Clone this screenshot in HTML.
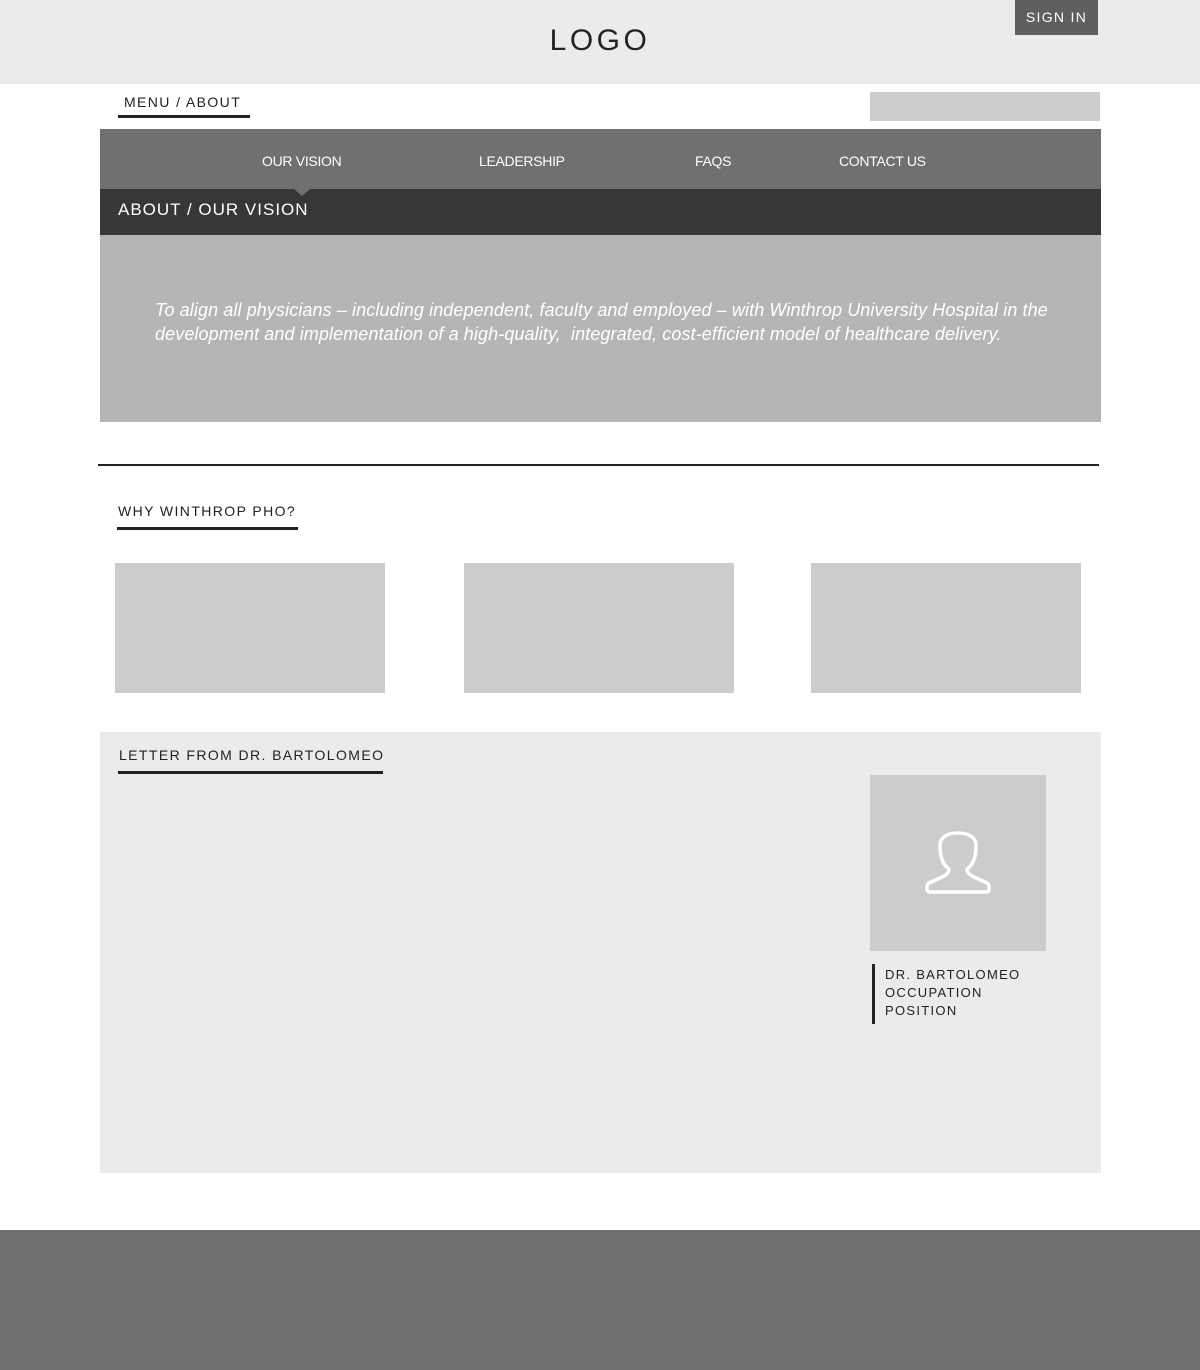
<!DOCTYPE html>
<html><head><meta charset="utf-8"><style>
*{margin:0;padding:0;box-sizing:border-box}
body{width:1200px;height:1370px;background:#fff;font-family:"Liberation Sans",sans-serif;position:relative;overflow:hidden}
.a{position:absolute}
</style></head><body>
<div class="a" style="left:0;top:0;width:1200px;height:84px;background:#ebebeb"></div>
<div class="a" style="left:0;top:24px;width:1200px;text-align:center;font-size:30px;letter-spacing:3.5px;color:#222">LOGO</div>
<div class="a" style="left:1015px;top:0;width:83px;height:35px;background:#5f5f5f;color:#fff;font-size:14px;letter-spacing:1.3px;text-align:center;line-height:34px">SIGN IN</div>
<div class="a" style="left:124px;top:94px;font-size:14px;letter-spacing:1.4px;color:#222">MENU / ABOUT</div>
<div class="a" style="left:118px;top:115px;width:132px;height:3px;background:#222"></div>
<div class="a" style="left:870px;top:92px;width:230px;height:29px;background:#cccccc"></div>
<div class="a" style="left:100px;top:129px;width:1001px;height:60px;background:#707070"></div>
<div class="a" style="left:262px;top:153px;color:#fff;font-size:14px;letter-spacing:-0.3px">OUR VISION</div>
<div class="a" style="left:479px;top:153px;color:#fff;font-size:14px;letter-spacing:-0.3px">LEADERSHIP</div>
<div class="a" style="left:695px;top:153px;color:#fff;font-size:14px;letter-spacing:-0.3px">FAQS</div>
<div class="a" style="left:839px;top:153px;color:#fff;font-size:14px;letter-spacing:-0.3px">CONTACT US</div>
<div class="a" style="left:100px;top:189px;width:1001px;height:46px;background:#373737"></div>
<div class="a" style="left:294px;top:189px;width:0;height:0;border-left:8px solid transparent;border-right:8px solid transparent;border-top:7px solid #707070"></div>
<div class="a" style="left:118px;top:200px;color:#fff;font-size:17px;letter-spacing:1px">ABOUT / OUR VISION</div>
<div class="a" style="left:100px;top:235px;width:1001px;height:187px;background:#b5b5b5"></div>
<div class="a" style="left:155px;top:298px;width:940px;color:#fff;font-size:18px;font-style:italic;line-height:24px;letter-spacing:0.1px">To align all physicians – including independent, faculty and employed – with Winthrop University Hospital in the development and implementation of a high-quality,&nbsp; integrated, cost-efficient model of healthcare delivery.</div>
<div class="a" style="left:98px;top:464px;width:1001px;height:2px;background:#222"></div>
<div class="a" style="left:118px;top:503px;font-size:14px;letter-spacing:1.4px;color:#222">WHY WINTHROP PHO?</div>
<div class="a" style="left:117px;top:527px;width:181px;height:3px;background:#222"></div>
<div class="a" style="left:115px;top:563px;width:270px;height:130px;background:#cccccc"></div>
<div class="a" style="left:464px;top:563px;width:270px;height:130px;background:#cccccc"></div>
<div class="a" style="left:811px;top:563px;width:270px;height:130px;background:#cccccc"></div>
<div class="a" style="left:100px;top:732px;width:1001px;height:441px;background:#ebebeb"></div>
<div class="a" style="left:119px;top:747px;font-size:14px;letter-spacing:1.4px;color:#222">LETTER FROM DR. BARTOLOMEO</div>
<div class="a" style="left:118px;top:771px;width:265px;height:3px;background:#222"></div>
<div class="a" style="left:870px;top:775px;width:176px;height:176px;background:#cccccc"></div>
<svg class="a" style="left:870px;top:775px" width="176" height="176"><path d="M79 94 C70 88 70 75 70 70 C70 62 78 58 88 58 C98 58 106 62 106 70 C106 75 106 88 97 94 C97 98 100 100 104 102 L117 108 C119 109 119 111 119 113 L119 115 C119 116 118 117 116 117 L60 117 C58 117 57 116 57 115 L57 113 C57 111 57 109 59 108 L72 102 C76 100 79 98 79 94 Z" fill="none" stroke="#fff" stroke-width="3.5" stroke-linejoin="round"/></svg>
<div class="a" style="left:872px;top:964px;width:3px;height:60px;background:#222"></div>
<div class="a" style="left:885px;top:966px;font-size:13px;letter-spacing:1.3px;line-height:18px;color:#222">DR. BARTOLOMEO<br>OCCUPATION<br>POSITION</div>
<div class="a" style="left:0;top:1230px;width:1200px;height:140px;background:#707070"></div>
</body></html>
